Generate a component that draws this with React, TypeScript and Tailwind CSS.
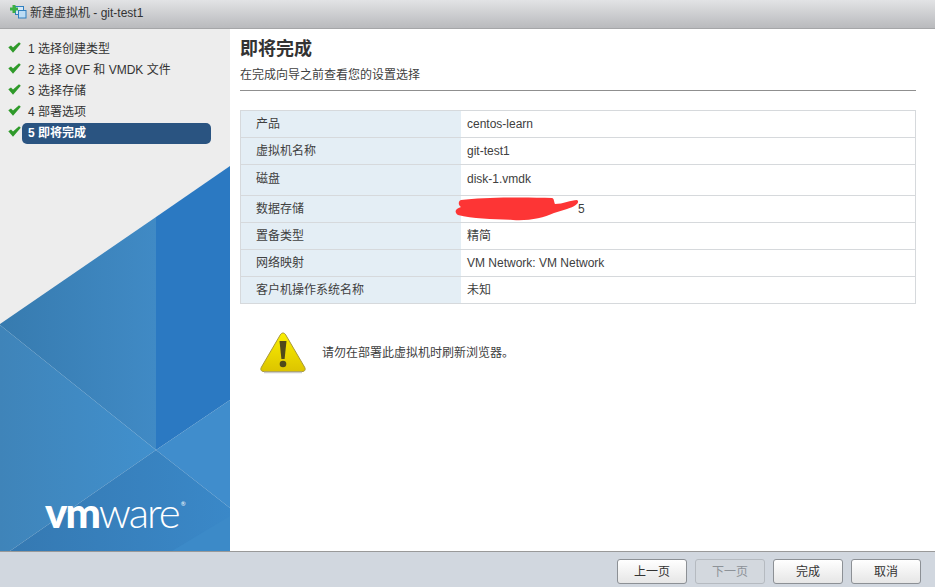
import React from 'react';

const FONT = 'font-["Liberation_Sans","Noto_Sans_CJK_SC",Arial,sans-serif]';

const steps = ['1 选择创建类型', '2 选择 OVF 和 VMDK 文件', '3 选择存储', '4 部署选项', '5 即将完成'];

const rows: { label: string; value: string; tall?: boolean }[] = [
  { label: '产品', value: 'centos-learn' },
  { label: '虚拟机名称', value: 'git-test1' },
  { label: '磁盘', value: 'disk-1.vmdk', tall: true },
  { label: '数据存储', value: '' },
  { label: '置备类型', value: '精简' },
  { label: '网络映射', value: 'VM Network: VM Network' },
  { label: '客户机操作系统名称', value: '未知' },
];

function Check() {
  return (
    <svg width="13" height="11" viewBox="0 0 13 11" className="shrink-0 -mt-[2px]">
      <path d="M0.3 5.3 L3 3.4 L5 5.6 L11 0.3 L12.8 1.8 L5 10.8 Z" fill="#2f9a2a" />
    </svg>
  );
}

function WizardIcon() {
  return (
    <svg width="17" height="17" viewBox="0 0 17 17" className="shrink-0">
      <rect x="5.5" y="2.5" width="8" height="8" fill="#d5e8f7" stroke="#2f7fc0" />
      <rect x="8.5" y="6.5" width="7.5" height="7.5" fill="#bcdcf4" stroke="#2f7fc0" />
      <path d="M2.5 1h3v2.5H8v3H5.5V9h-3V6.5H0v-3h2.5z" fill="#3cb043" />
    </svg>
  );
}

function SideArt() {
  return (
    <svg width="230" height="385" viewBox="0 166 230 385" className="block">
      <defs>
        <linearGradient id="mid" x1="0" x2="1" y1="0" y2="0">
          <stop offset="0" stopColor="#377baf" />
          <stop offset="1" stopColor="#408ac5" />
        </linearGradient>
        <linearGradient id="left" x1="0" x2="1" y1="0" y2="0">
          <stop offset="0" stopColor="#3f84b9" />
          <stop offset="1" stopColor="#4190cd" />
        </linearGradient>
        <linearGradient id="low" x1="0" x2="1" y1="0" y2="0">
          <stop offset="0" stopColor="#3579b2" />
          <stop offset="1" stopColor="#3a88c8" />
        </linearGradient>
      </defs>
      <polygon points="0,324 156,217 156,450 0,325" fill="url(#mid)" />
      <polygon points="156,217 230,166 230,400 156,450" fill="#2b79c2" />
      <polygon points="0,325 156,450 10,551 0,551" fill="url(#left)" />
      <polygon points="156,450 230,400 230,508" fill="#408dcc" />
      <polygon points="10,551 156,450 230,508 230,551" fill="url(#low)" />
      <polygon points="172,551 230,516 230,551" fill="#3c8ac8" />
    </svg>
  );
}

function WarningIcon() {
  return (
    <svg width="48" height="44" viewBox="0 0 48 44" className="shrink-0">
      <defs>
        <linearGradient id="warn" x1="0" x2="0" y1="0" y2="1">
          <stop offset="0" stopColor="#fbef00" />
          <stop offset="1" stopColor="#dcc400" />
        </linearGradient>
      </defs>
      <path d="M24 2 C25 2 26 2.6 26.8 4 L45.5 36 C47 38.5 46 40.5 43 40.5 L5 40.5 C2 40.5 1 38.5 2.5 36 L21.2 4 C22 2.6 23 2 24 2 Z" fill="url(#warn)" stroke="#a8983a" strokeWidth="1" />
      <path d="M5 41.5 L43 41.5" stroke="#c9c9c9" strokeWidth="1.5" />
      <path d="M20.5 10 L27.5 10 L25.6 28 L22.4 28 Z" fill="#4f4a1a" />
      <circle cx="24" cy="33" r="3.3" fill="#4f4a1a" />
    </svg>
  );
}

function FooterButton({ label, disabled }: { label: string; disabled?: boolean }) {
  return (
    <button
      disabled={disabled}
      className={
        disabled
          ? 'w-[70px] h-[25px] rounded-[3px] border border-[#b5bac0] bg-[#d3d8de] text-[#8d9298] text-xs'
          : 'w-[70px] h-[25px] rounded-[3px] border border-[#8c9095] bg-gradient-to-b from-white to-[#e6e6e6] text-[#333] text-xs'
      }
    >
      {label}
    </button>
  );
}

export default function App() {
  return (
    <div className={`${FONT} flex flex-col w-[935px] h-[587px] overflow-hidden bg-white text-xs text-[#404040]`}>
      <div className="flex items-center gap-[3px] h-[29px] pl-[10px] pb-[3px] bg-gradient-to-b from-[#e2e3e5] to-[#b9babd] border-b border-[#a5a6a8] text-[#333]">
        <WizardIcon />
        <span>新建虚拟机 - git-test1</span>
      </div>

      <div className="flex flex-1 min-h-0">
        <aside className="relative flex flex-col justify-between w-[230px] bg-[#ededed]">
          <ul className="flex flex-col pt-[9px] pl-[8px]">
            {steps.map((step, i) => (
              <li key={step} className="flex items-center h-[21px] text-[#333]">
                <Check />
                <span
                  className={
                    i === 4
                      ? 'flex items-center w-[189px] h-[21px] mt-[2px] pb-[2px] ml-[1px] pl-[6px] rounded-[5px] bg-[#2a5481] text-white font-bold'
                      : 'ml-[7px]'
                  }
                >
                  {step}
                </span>
              </li>
            ))}
          </ul>
          <SideArt />
          <div className="absolute left-[45px] bottom-[18px] flex items-baseline leading-none text-white font-['Lato',sans-serif] text-[42px] tracking-[-2px]">
            <span className="font-black">vm</span>
            <span className="font-light">ware</span>
            <span className="self-start mt-[10px] ml-[2px] text-[6px] tracking-normal">®</span>
          </div>
        </aside>

        <main className="flex-1 min-w-0 pl-[10px] pr-[19px]">
          <h1 className="mt-[9px] text-[18px] leading-[22px] font-bold text-[#333]">即将完成</h1>
          <p className="mt-[7px] pb-[6px] leading-[17px] border-b border-[#8f8f8f]">在完成向导之前查看您的设置选择</p>

          <div className="relative mt-[19px] border-t border-l border-[#d6d9dc]">
            {rows.map((row) => (
              <div key={row.label} className={`flex border-b border-r border-[#d6d9dc] ${row.tall ? 'h-[31px] pb-[3px]' : 'h-[27px]'}`}>
                <div className={`flex items-center w-[220px] pl-[15px] bg-[#e4eef5] ${row.tall ? '-mb-[3px] pb-[3px]' : ''}`}>{row.label}</div>
                <div className="flex items-center pl-[6px]">{row.value}</div>
              </div>
            ))}
            <span className="absolute left-[337px] top-[90px]">5</span>
            <svg width="125" height="26" viewBox="0 0 125 26" className="absolute left-[214px] top-[86px]">
              <path d="M6 3 C30 0 72 0 97 1 C99 1 99 5 100 7 C108 7 116 3 122 3 C125 5 122 9 112 12 L99 16 C88 21 74 24 58 23 C40 22 18 22 3 18 C-1 15 0 12 6 10 C3 8 3 4 6 3 Z" fill="#fd3535" />
            </svg>
          </div>

          <div className="flex items-center mt-[27px] pl-[19px]">
            <WarningIcon />
            <span className="ml-[15px]">请勿在部署此虚拟机时刷新浏览器。</span>
          </div>
        </main>
      </div>

      <div className="flex items-end justify-end gap-[8px] h-[36px] pr-[14px] pb-[3px] bg-[#d1d7df] border-t border-[#999]">
        <FooterButton label="上一页" />
        <FooterButton label="下一页" disabled />
        <FooterButton label="完成" />
        <FooterButton label="取消" />
      </div>
    </div>
  );
}
